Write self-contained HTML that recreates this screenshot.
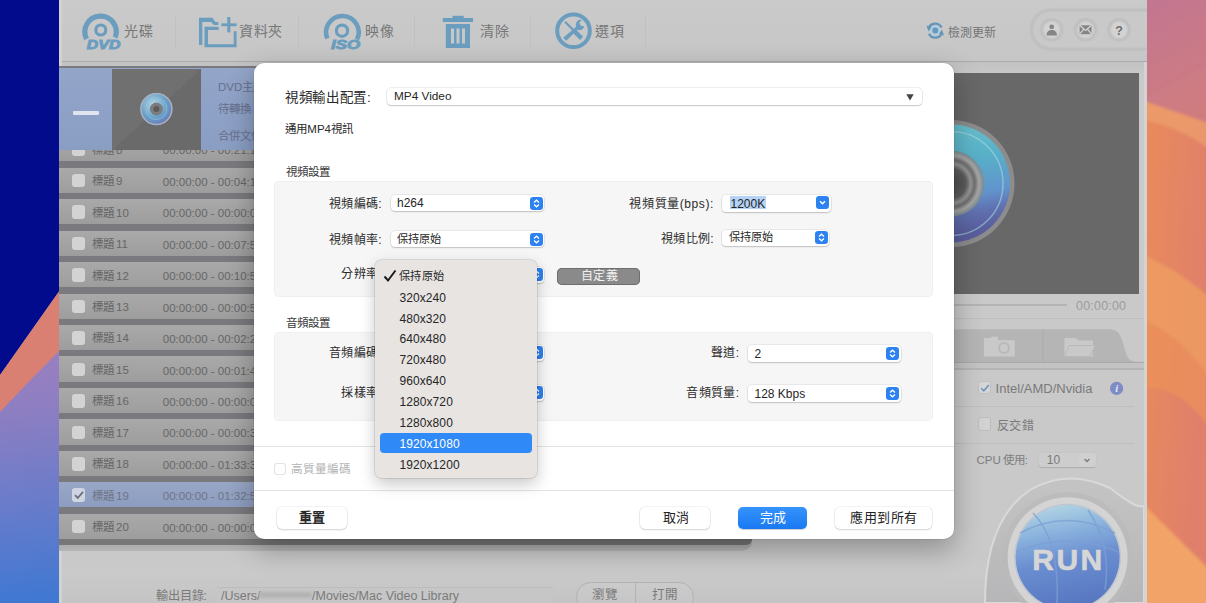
<!DOCTYPE html>
<html lang="zh-TW"><head><meta charset="utf-8">
<style>
*{box-sizing:border-box;margin:0;padding:0}
html,body{width:1206px;height:603px;overflow:hidden;background:#c9c9c9}
body{position:relative;font-family:"Liberation Sans",sans-serif;color:#222}
.a{position:absolute}
.t{position:absolute;white-space:nowrap;line-height:1;font-weight:500}
</style></head><body>

<!-- left wallpaper -->
<svg class="a" style="left:0;top:0" width="60" height="603" viewBox="0 0 60 603">
<defs>
<linearGradient id="lwp" gradientUnits="userSpaceOnUse" x1="0" y1="350" x2="25" y2="603">
<stop offset="0" stop-color="#9a80bf"/><stop offset="0.25" stop-color="#8d7ec2"/><stop offset="0.6" stop-color="#6a7cca"/><stop offset="1" stop-color="#3f78d2"/>
</linearGradient>
</defs>
<rect width="60" height="603" fill="url(#lwp)"/>
<path d="M0 0H60V290L0 375Z" fill="#020b8c"/>
<path d="M0 375L60 290V350Q30 380 0 412Z" fill="#d98073"/>
</svg>

<!-- right wallpaper -->
<svg class="a" style="left:1146px;top:0" width="60" height="603" viewBox="0 0 60 603">
<defs>
<linearGradient id="rwp" x1="0" y1="0" x2="0.3" y2="1">
<stop offset="0" stop-color="#c17592"/><stop offset="1" stop-color="#cf7c80"/>
</linearGradient>
<linearGradient id="rwo" x1="0" y1="0" x2="1" y2="0.6">
<stop offset="0" stop-color="#ea8c5a"/><stop offset="1" stop-color="#df7f6c"/>
</linearGradient>
<linearGradient id="rwl" x1="0" y1="0" x2="1" y2="1">
<stop offset="0" stop-color="#f1a264"/><stop offset="1" stop-color="#ee9660"/>
</linearGradient>
<filter id="bl"><feGaussianBlur stdDeviation="1.5"/></filter>
</defs>
<rect width="60" height="603" fill="url(#rwo)"/>
<g filter="url(#bl)">
<path d="M-5 -5H65V124L-5 100Z" fill="url(#rwp)"/>
<path d="M-5 100L65 124V150Q30 125 -5 120Z" fill="#eea06e" opacity=".7"/>
<path d="M-5 254Q30 268 65 299V380Q30 330 -5 320Z" fill="#ef9c62" opacity=".85"/>
<path d="M-5 320Q30 330 65 380V430Q30 380 -5 390Z" fill="#ec9159" opacity=".7"/>
<path d="M-5 502L65 571V610H-5Z" fill="#f2a468"/>
</g>
</svg>

<!-- app window -->
<div class="a" id="app" style="left:59px;top:0;width:1088px;height:603px;background:#c8c8c8;overflow:hidden"></div>

<!-- toolbar -->
<div class="a" style="left:59px;top:0;width:1088px;height:61px;background:linear-gradient(#cacaca,#c6c6c6)"></div>
<div class="a" style="left:59px;top:61px;width:1088px;height:1px;background:#a9a9a9"></div>
<div class="a" style="left:59px;top:62px;width:1088px;height:5px;background:#c3c3c3"></div>
<div class="a" style="left:59px;top:0;width:3px;height:603px;background:#d2d2d2"></div>
<svg class="a" style="left:0;top:0" width="1147" height="62" viewBox="0 0 1147 62">
<g fill="none" stroke="#6b9dbf">
 <!-- DVD -->
 <path d="M86.6 39A15.7 15.7 0 1 1 115.2 37.5" stroke-width="5.2"/>
 <circle cx="100.8" cy="30" r="5" stroke-width="3.2"/>
 <!-- ISO -->
 <path d="M327.3 38.5A16.3 16.3 0 1 1 357 39.5" stroke-width="4.6"/>
 <circle cx="342" cy="30.7" r="5.6" stroke-width="3.2"/>
 <!-- options -->
 <circle cx="573.5" cy="30.8" r="16.3" stroke-width="4"/>
</g>
<g fill="#6b9dbf">
 <text x="87" y="48.7" font-family="Liberation Sans" font-weight="bold" font-style="italic" font-size="12.5" stroke="#6b9dbf" stroke-width="0.9" transform="translate(87.5 0) scale(1.27 1) translate(-87.5 0)" >DVD</text>
 <text x="331" y="49.4" font-family="Liberation Sans" font-weight="bold" font-style="italic" font-size="13" stroke="#6b9dbf" stroke-width="0.9" transform="translate(331 0) scale(1.3 1) translate(-331 0)">ISO</text>
 <!-- folder -->
 <path d="M199 17.8H212.4L215.5 22H218.4V25H214L211 22H202.3V45H199Z"/>
 <path d="M204.5 26.8H218.7V30H208V44.3H233.7V31.3H236.6V47.3H204.5Z"/>
 <rect x="227.3" y="17" width="3" height="15.4"/>
 <rect x="221.3" y="23.4" width="15.3" height="2.8"/>
 <!-- trash -->
 <rect x="452.5" y="15.8" width="11.2" height="3"/>
 <rect x="442.8" y="18" width="30.2" height="4"/>
 <path d="M445.8 24H470V48H445.8Z M451 28.5V43.6H454V28.5Z M456.5 28.5V43.6H459.5V28.5Z M462 28.5V43.6H465V28.5Z" fill-rule="evenodd"/>
 <!-- wrench/screwdriver -->
 <path d="M564.2 22.6L565.8 21L575 30.2L573.4 31.8Z"/>
 <path d="M572.3 32.2L575.5 29L583.2 36.7L580 39.9Z"/>
 <path d="M563.2 37.7L566.3 40.8L577.3 29.8Q582.5 31.2 584.3 26.5L580.6 25.6L579.3 22.4L582 19.9Q577.2 18.6 575.8 23.9Q575.6 25.5 576.2 26.7Z"/>
</g>
<g stroke="#c0c0c0" stroke-width="1">
 <line x1="175.5" y1="16" x2="175.5" y2="47"/>
 <line x1="298.5" y1="16" x2="298.5" y2="47"/>
 <line x1="414.5" y1="16" x2="414.5" y2="47"/>
 <line x1="530.5" y1="16" x2="530.5" y2="47"/>
 <line x1="645.5" y1="16" x2="645.5" y2="47"/>
</g>
<!-- refresh -->
<g fill="none" stroke="#6596ba" stroke-width="2.4">
 <path d="M928.6 28.5A7 7 0 0 1 941.5 27.5"/>
 <path d="M942 32.5A7 7 0 0 1 929 33.8"/>
</g>
<circle cx="935.3" cy="30.6" r="4.6" fill="#a6d2e6"/>
<circle cx="935.3" cy="30.6" r="3" fill="#6898bc"/>
<path d="M926.5 25.5L928.6 31.5L931.5 27Z M944 35.5L942 29.6L939 34Z" fill="#6596ba"/>
<!-- pill -->
<defs><filter id="sb"><feGaussianBlur stdDeviation="0.8"/></filter></defs>
<rect x="1031.5" y="10" width="140" height="39" rx="19.5" fill="#c9c9c9" stroke="#b9b9b9" stroke-width="2" filter="url(#sb)"/>
<g fill="#d3d3d3" stroke="#b7b7b7" stroke-width="2" filter="url(#sb)">
 <circle cx="1051.7" cy="29.8" r="10"/>
 <circle cx="1085.6" cy="29.8" r="10"/>
 <circle cx="1119" cy="29.8" r="10"/>
</g>
<g fill="#858585">
 <circle cx="1051.7" cy="26.8" r="2.4"/>
 <path d="M1046.5 35.5Q1046.5 30 1051.7 30Q1056.9 30 1056.9 35.5Z"/>
 <path d="M1079.6 25.3H1091.6V34.2H1079.6Z"/>
</g>
<path d="M1079.6 25.3L1085.6 30.5L1091.6 25.3M1079.6 34.2L1083.6 29.3M1091.6 34.2L1087.6 29.3" stroke="#d3d3d3" stroke-width="1.3" fill="none"/>
<text x="1119" y="34.5" text-anchor="middle" font-family="Liberation Sans" font-weight="bold" font-size="12.5" fill="#6e6e6e">?</text>
</svg>
<div class="t" style="left:124px;top:24.3px;font-size:14px;letter-spacing:0.7px;color:#767676">光碟</div>
<div class="t" style="left:239px;top:24.3px;font-size:14px;letter-spacing:0.7px;color:#767676">資料夾</div>
<div class="t" style="left:365px;top:24.3px;font-size:14px;letter-spacing:0.7px;color:#767676">映像</div>
<div class="t" style="left:480px;top:24.3px;font-size:14px;letter-spacing:0.7px;color:#767676">清除</div>
<div class="t" style="left:595px;top:24.3px;font-size:14px;letter-spacing:0.7px;color:#767676">選項</div>
<div class="t" style="left:948px;top:27.3px;font-size:12px;letter-spacing:0.1px;color:#747474">檢測更新</div>



<!-- list -->
<div class="a" style="left:59px;top:540px;width:693px;height:11px;background:linear-gradient(#a3a3a3,#b6b6b6);border-radius:0 0 10px 0"></div>
<div class="a" style="left:59px;top:66px;width:693px;height:479px;background:#7a7a7e;border-radius:0 0 10px 0"></div>
<div class="a" style="left:59px;top:136.30px;width:693px;height:25.2px;background:linear-gradient(#a9a9a9,#a2a2a2 60%,#9d9d9d)"></div>
<div class="a" style="left:71.5px;top:142.50px;width:13.5px;height:13.5px;border-radius:3px;background:#d3d3d3"></div>
<div class="t" style="left:91.5px;top:144.70px;font-size:11.5px;color:#666">標題<span style="margin-left:2.5px">8</span></div>
<div class="t" style="left:162.8px;top:145.40px;font-size:11.5px;color:#666">00:00:00 - 00:21:17</div>
<div class="a" style="left:59px;top:167.75px;width:693px;height:25.2px;background:linear-gradient(#a9a9a9,#a2a2a2 60%,#9d9d9d)"></div>
<div class="a" style="left:71.5px;top:173.95px;width:13.5px;height:13.5px;border-radius:3px;background:#d3d3d3"></div>
<div class="t" style="left:91.5px;top:176.15px;font-size:11.5px;color:#666">標題<span style="margin-left:2.5px">9</span></div>
<div class="t" style="left:162.8px;top:176.85px;font-size:11.5px;color:#666">00:00:00 - 00:04:18</div>
<div class="a" style="left:59px;top:199.20px;width:693px;height:25.2px;background:linear-gradient(#a9a9a9,#a2a2a2 60%,#9d9d9d)"></div>
<div class="a" style="left:71.5px;top:205.40px;width:13.5px;height:13.5px;border-radius:3px;background:#d3d3d3"></div>
<div class="t" style="left:91.5px;top:207.60px;font-size:11.5px;color:#666">標題<span style="margin-left:2.5px">10</span></div>
<div class="t" style="left:162.8px;top:208.30px;font-size:11.5px;color:#666">00:00:00 - 00:00:05</div>
<div class="a" style="left:59px;top:230.65px;width:693px;height:25.2px;background:linear-gradient(#a9a9a9,#a2a2a2 60%,#9d9d9d)"></div>
<div class="a" style="left:71.5px;top:236.85px;width:13.5px;height:13.5px;border-radius:3px;background:#d3d3d3"></div>
<div class="t" style="left:91.5px;top:239.05px;font-size:11.5px;color:#666">標題<span style="margin-left:2.5px">11</span></div>
<div class="t" style="left:162.8px;top:239.75px;font-size:11.5px;color:#666">00:00:00 - 00:07:52</div>
<div class="a" style="left:59px;top:262.10px;width:693px;height:25.2px;background:linear-gradient(#a9a9a9,#a2a2a2 60%,#9d9d9d)"></div>
<div class="a" style="left:71.5px;top:268.30px;width:13.5px;height:13.5px;border-radius:3px;background:#d3d3d3"></div>
<div class="t" style="left:91.5px;top:270.50px;font-size:11.5px;color:#666">標題<span style="margin-left:2.5px">12</span></div>
<div class="t" style="left:162.8px;top:271.20px;font-size:11.5px;color:#666">00:00:00 - 00:10:54</div>
<div class="a" style="left:59px;top:293.55px;width:693px;height:25.2px;background:linear-gradient(#a9a9a9,#a2a2a2 60%,#9d9d9d)"></div>
<div class="a" style="left:71.5px;top:299.75px;width:13.5px;height:13.5px;border-radius:3px;background:#d3d3d3"></div>
<div class="t" style="left:91.5px;top:301.95px;font-size:11.5px;color:#666">標題<span style="margin-left:2.5px">13</span></div>
<div class="t" style="left:162.8px;top:302.65px;font-size:11.5px;color:#666">00:00:00 - 00:00:57</div>
<div class="a" style="left:59px;top:325.00px;width:693px;height:25.2px;background:linear-gradient(#a9a9a9,#a2a2a2 60%,#9d9d9d)"></div>
<div class="a" style="left:71.5px;top:331.20px;width:13.5px;height:13.5px;border-radius:3px;background:#d3d3d3"></div>
<div class="t" style="left:91.5px;top:333.40px;font-size:11.5px;color:#666">標題<span style="margin-left:2.5px">14</span></div>
<div class="t" style="left:162.8px;top:334.10px;font-size:11.5px;color:#666">00:00:00 - 00:02:24</div>
<div class="a" style="left:59px;top:356.45px;width:693px;height:25.2px;background:linear-gradient(#a9a9a9,#a2a2a2 60%,#9d9d9d)"></div>
<div class="a" style="left:71.5px;top:362.65px;width:13.5px;height:13.5px;border-radius:3px;background:#d3d3d3"></div>
<div class="t" style="left:91.5px;top:364.85px;font-size:11.5px;color:#666">標題<span style="margin-left:2.5px">15</span></div>
<div class="t" style="left:162.8px;top:365.55px;font-size:11.5px;color:#666">00:00:00 - 00:01:47</div>
<div class="a" style="left:59px;top:387.90px;width:693px;height:25.2px;background:linear-gradient(#a9a9a9,#a2a2a2 60%,#9d9d9d)"></div>
<div class="a" style="left:71.5px;top:394.10px;width:13.5px;height:13.5px;border-radius:3px;background:#d3d3d3"></div>
<div class="t" style="left:91.5px;top:396.30px;font-size:11.5px;color:#666">標題<span style="margin-left:2.5px">16</span></div>
<div class="t" style="left:162.8px;top:397.00px;font-size:11.5px;color:#666">00:00:00 - 00:00:09</div>
<div class="a" style="left:59px;top:419.35px;width:693px;height:25.2px;background:linear-gradient(#a9a9a9,#a2a2a2 60%,#9d9d9d)"></div>
<div class="a" style="left:71.5px;top:425.55px;width:13.5px;height:13.5px;border-radius:3px;background:#d3d3d3"></div>
<div class="t" style="left:91.5px;top:427.75px;font-size:11.5px;color:#666">標題<span style="margin-left:2.5px">17</span></div>
<div class="t" style="left:162.8px;top:428.45px;font-size:11.5px;color:#666">00:00:00 - 00:00:38</div>
<div class="a" style="left:59px;top:450.80px;width:693px;height:25.2px;background:linear-gradient(#a9a9a9,#a2a2a2 60%,#9d9d9d)"></div>
<div class="a" style="left:71.5px;top:457.00px;width:13.5px;height:13.5px;border-radius:3px;background:#d3d3d3"></div>
<div class="t" style="left:91.5px;top:459.20px;font-size:11.5px;color:#666">標題<span style="margin-left:2.5px">18</span></div>
<div class="t" style="left:162.8px;top:459.90px;font-size:11.5px;color:#666">00:00:00 - 01:33:35</div>
<div class="a" style="left:59px;top:482.25px;width:693px;height:25.2px;background:linear-gradient(#98a7c6,#8d9dc0)"></div>
<div class="a" style="left:71.5px;top:488.45px;width:13.5px;height:13.5px;border-radius:3px;background:#cfd5e2"></div>
<svg class="a" style="left:71.5px;top:488.45px" width="14" height="14" viewBox="0 0 14 14"><path d="M3 7.2L5.8 10L11 3.8" fill="none" stroke="#6a6f7a" stroke-width="1.8"/></svg>
<div class="t" style="left:91.5px;top:490.65px;font-size:11.5px;color:#6f7486">標題<span style="margin-left:2.5px">19</span></div>
<div class="t" style="left:162.8px;top:491.35px;font-size:11.5px;color:#6f7486">00:00:00 - 01:32:56</div>
<div class="a" style="left:59px;top:513.70px;width:693px;height:25.2px;background:linear-gradient(#a9a9a9,#a2a2a2 60%,#9d9d9d)"></div>
<div class="a" style="left:71.5px;top:519.90px;width:13.5px;height:13.5px;border-radius:3px;background:#d3d3d3"></div>
<div class="t" style="left:91.5px;top:522.10px;font-size:11.5px;color:#666">標題<span style="margin-left:2.5px">20</span></div>
<div class="t" style="left:162.8px;top:522.80px;font-size:11.5px;color:#666">00:00:00 - 00:00:08</div>
<div class="a" style="left:59px;top:538.5px;width:693px;height:6.5px;background:#777;border-radius:0 0 10px 0"></div>
<div class="a" style="left:59px;top:68px;width:693px;height:81.5px;background:linear-gradient(#93a5c9,#8a9dc3)"></div>
<div class="a" style="left:73px;top:111px;width:26px;height:4px;background:#dfe4ee;border-radius:1px"></div>
<div class="a" style="left:112px;top:68.5px;width:89px;height:81px;background:linear-gradient(to bottom right,#707070 50%,#6a6a6a 50%)"></div>
<svg class="a" style="left:140px;top:93px" width="33" height="33" viewBox="0 0 33 33">
<defs><radialGradient id="dg" cx="0.4" cy="0.35" r="0.7"><stop offset="0" stop-color="#b6d6e6"/><stop offset="0.6" stop-color="#6aa2c8"/><stop offset="1" stop-color="#6a78b8"/></radialGradient></defs>
<circle cx="16.4" cy="16" r="15.5" fill="url(#dg)" stroke="#a7b3c4" stroke-width="1.5"/>
<circle cx="16.4" cy="16" r="10.5" fill="none" stroke="#8ec4dc" stroke-width="1" opacity=".7"/>
<circle cx="16.4" cy="16" r="6.5" fill="#7c7c80"/>
<circle cx="16.4" cy="16" r="3" fill="#5e5a58"/>
</svg>
<div class="t" style="left:218px;top:81.5px;font-size:11.5px;color:#67708e">DVD主題</div>
<div class="t" style="left:218px;top:104px;font-size:11.5px;color:#67708e">待轉換</div>
<div class="t" style="left:218px;top:131px;font-size:11.5px;color:#67708e">合併文件</div>
<!-- bottom bar -->
<div class="a" style="left:62px;top:551px;width:1082px;height:52px;background:linear-gradient(#c8c8c8,#cacaca 40%,#c4c4c4)"></div>
<div class="a" style="left:217px;top:586.7px;width:336px;height:20px;background:#c6c6c6;border-top:1px solid #bcbcbc"></div>
<div class="t" style="left:155.5px;top:590px;font-size:12.2px;color:#7a7a7a">輸出目錄:</div>
<div class="t" style="left:221px;top:589.5px;font-size:12.5px;color:#7a7a7a">/Users/</div>
<div class="a" style="left:259px;top:592px;width:53px;height:6px;background:#b3b3b3;filter:blur(1.5px)"></div>
<div class="t" style="left:312px;top:589.5px;font-size:12.5px;color:#7a7a7a">/Movies/Mac Video Library</div>
<div class="a" style="left:575.5px;top:581.5px;width:118px;height:30px;border-radius:15px;background:linear-gradient(#cbcbcb,#c4c4c4);border:1px solid #b2b2b2"></div>
<div class="a" style="left:634.5px;top:582px;width:1px;height:22px;background:#b2b2b2"></div>
<div class="t" style="left:592px;top:589px;font-size:12.5px;color:#7a7a7a">瀏覽</div>
<div class="t" style="left:652px;top:589px;font-size:12.5px;color:#7a7a7a">打開</div>


<!-- right panel -->
<div class="a" style="left:762px;top:67px;width:385px;height:483px;background:#c9c9c9"></div>
<div class="a" style="left:762px;top:62px;width:385px;height:11px;background:linear-gradient(#c2c2c2,#c8c8c8)"></div>
<div class="a" style="left:1144px;top:62px;width:3px;height:541px;background:#d3d3d3"></div>
<div class="a" style="left:900px;top:73px;width:239px;height:220.5px;background:#686868;overflow:hidden">
<svg class="a" style="left:0;top:0" width="239" height="221" viewBox="0 0 239 221">
<defs>
<linearGradient id="cdg" x1="0" y1="0" x2="0.2" y2="1">
<stop offset="0" stop-color="#6cc6d0"/><stop offset="0.4" stop-color="#58b0c8"/><stop offset="0.7" stop-color="#6294cc"/><stop offset="0.85" stop-color="#6070b0"/><stop offset="1" stop-color="#5a5e9c"/>
</linearGradient>
<radialGradient id="hub" cx="0.5" cy="0.5" r="0.5"><stop offset="0" stop-color="#4a4a4a"/><stop offset="0.45" stop-color="#5c5c5c"/><stop offset="0.6" stop-color="#959595"/><stop offset="0.72" stop-color="#6e6e6e"/><stop offset="0.85" stop-color="#a6a6a6"/><stop offset="1" stop-color="#7a8a90"/></radialGradient>
</defs>
<circle cx="51" cy="110.5" r="63.5" fill="#8c8c8c"/>
<circle cx="51" cy="110.5" r="59" fill="url(#cdg)"/>
<circle cx="51" cy="110.5" r="52" fill="none" stroke="#a8dde6" stroke-width="1.5" opacity=".55"/>
<circle cx="51" cy="110.5" r="33" fill="url(#hub)"/>
</svg>
</div>
<div class="a" style="left:900px;top:304px;width:166.5px;height:2px;background:#b4b4b4"></div>
<div class="t" style="left:1076px;top:299.5px;font-size:12.5px;color:#9c9c9c;letter-spacing:0.2px">00:00:00</div>
<div class="a" style="left:900px;top:317.5px;width:244px;height:1px;background:#bdbdbd"></div>
<svg class="a" style="left:900px;top:328px" width="244" height="42" viewBox="0 0 244 42">
<path d="M0 1.3H210Q219 1.3 222 12L227 28Q230 34.4 240 34.4H244V42H0Z" fill="#b5b5b5"/>
<path d="M0 34.4H244" stroke="#a9a9a9" stroke-width="1"/>
<rect x="0" y="35" width="244" height="5" fill="#c3c3c3"/>
<line x1="143" y1="1.5" x2="143" y2="34" stroke="#a9a9a9"/>
<g fill="#c9c9c9">
<path d="M84 10H90L92 8.7H98V13H84Z M84 12.3H114.7V28.6H84Z" />
<path d="M164.4 10H176L178 12.5H193V28.6H164.4Z"/>
</g>
<circle cx="104" cy="20" r="5" fill="none" stroke="#b9b9b9" stroke-width="2.2"/>
<path d="M164.4 28.6L169 17.5H195L190 28.6Z" fill="#c9c9c9" stroke="#b9b9b9" stroke-width="1"/>
</svg>
<div class="a" style="left:977.9px;top:380.8px;width:13.5px;height:13.5px;border-radius:3px;background:#d6d6d6;border:1px solid #c0c0c0"></div>
<svg class="a" style="left:977.9px;top:380.8px" width="14" height="14" viewBox="0 0 14 14"><path d="M3.2 7.2L5.8 9.8L10.8 4" fill="none" stroke="#6f90c2" stroke-width="1.5"/></svg>
<div class="t" style="left:995.6px;top:382px;font-size:13px;color:#7a7a7a">Intel/AMD/Nvidia</div>
<svg class="a" style="left:1109px;top:381px" width="16" height="16" viewBox="0 0 16 16"><circle cx="7.6" cy="7.4" r="6.6" fill="#7d8cc4"/><text x="7.6" y="11.4" text-anchor="middle" font-family="Liberation Serif" font-style="italic" font-weight="bold" font-size="10.5" fill="#e6e9f4">i</text></svg>
<div class="a" style="left:954px;top:406px;width:180px;height:1px;background:#bebebe"></div>
<div class="a" style="left:977.9px;top:417px;width:13.5px;height:14px;border-radius:3px;background:#d2d2d2;border:1px solid #bdbdbd"></div>
<div class="t" style="left:997.2px;top:420px;font-size:12px;letter-spacing:0.2px;color:#7a7a7a">反交錯</div>
<div class="a" style="left:954px;top:442.5px;width:180px;height:1px;background:#bebebe"></div>
<div class="t" style="left:976.5px;top:454.5px;font-size:11.5px;color:#7e7e7e">CPU<span style="margin-left:2px">使用:</span></div>
<div class="a" style="left:1039px;top:452.6px;width:56.5px;height:14.6px;border-radius:3px;background:#cdcdcd;box-shadow:0 0.5px 1px rgba(0,0,0,.15)"></div>
<div class="a" style="left:1079px;top:452.6px;width:16.5px;height:14.6px;border-radius:3px;background:#d0d0d0"></div>
<div class="t" style="left:1046.8px;top:454px;font-size:12px;color:#7a7a7a">10</div>
<svg class="a" style="left:1082px;top:455px" width="10" height="10" viewBox="0 0 10 10"><path d="M2.5 4L5 6.5L7.5 4" fill="none" stroke="#7a7a7a" stroke-width="1.3"/></svg>
<!-- RUN -->
<svg class="a" style="left:954px;top:462px" width="190" height="141" viewBox="954 462 190 141">
<defs>
<linearGradient id="runb" x1="0.3" y1="0" x2="0.5" y2="1">
<stop offset="0" stop-color="#b2d6e4"/><stop offset="0.3" stop-color="#86aedc"/><stop offset="0.55" stop-color="#6a8dd0"/><stop offset="1" stop-color="#5676c0"/>
</linearGradient>
<linearGradient id="hous" x1="0" y1="0" x2="0" y2="1"><stop offset="0" stop-color="#c4c4c4"/><stop offset="1" stop-color="#b6b6b8"/></linearGradient>
</defs>
<path d="M985 603Q985 520 1030 490Q1067 468 1110 488Q1125 500 1135 505Q1140 507 1144 506V603Z" fill="url(#hous)" stroke="#d9d9d9" stroke-width="2"/>
<circle cx="1067.6" cy="557.2" r="65" fill="#bababa" opacity=".8"/>
<circle cx="1067.6" cy="557.2" r="60" fill="#d4d4d4"/>
<circle cx="1067.6" cy="557.2" r="53.5" fill="#c0c6d0"/>
<circle cx="1067.6" cy="557.2" r="52" fill="url(#runb)"/>
<g fill="none" stroke="#7c9fd4" stroke-width="1.6" opacity=".75">
<path d="M1020 533Q1067 508 1115 533"/>
<path d="M1016 552Q1067 530 1119 552"/>
<path d="M1033 513Q1060 540 1057 605"/>
<path d="M1088 510Q1112 545 1105 590"/>
</g>
<text x="1068.5" y="570.2" text-anchor="middle" font-family="Liberation Sans" font-weight="bold" font-size="30" letter-spacing="2.5" fill="#d6d6d6" stroke="#d6d6d6" stroke-width="0.6">RUN</text>
</svg>
<!-- dialog -->
<div class="a" id="dlg" style="left:254px;top:63px;width:700px;height:476px;background:#fff;border-radius:10px;box-shadow:0 0 0 0.5px rgba(0,0,0,.12),0 10px 28px rgba(0,0,0,.3)"></div>
<div class="t" style="left:285.3px;top:91px;font-size:13.5px;letter-spacing:0.6px;color:#2a2a2a">視頻輸出配置:</div>
<div class="a" style="left:387px;top:88.3px;width:535px;height:16.5px;background:#fff;border-radius:4px;box-shadow:0 0 0 0.5px rgba(0,0,0,.12),0 1px 1.5px rgba(0,0,0,.18)"></div>
<div class="t" style="left:394px;top:90.5px;font-size:11.8px;color:#262626">MP4 Video</div>
<svg class="a" style="left:905px;top:92px" width="10" height="10" viewBox="0 0 10 10"><path d="M1.3 2.2H8.7L5 8.5Z" fill="#444"/></svg>
<div class="t" style="left:285.3px;top:123.5px;font-size:11.5px;color:#2a2a2a">通用MP4視訊</div>

<div class="t" style="left:285.8px;top:166.8px;font-size:11.5px;color:#3a3a3a">視頻設置</div>
<div class="a" style="left:273.6px;top:181px;width:659.5px;height:116px;background:#f6f6f6;border-radius:5px;box-shadow:inset 0 0 0 0.5px rgba(0,0,0,.06)"></div>

<div class="t" style="right:824px;top:197.8px;font-size:12px;letter-spacing:0.35px;color:#2a2a2a">視頻編碼:</div>
<div class="a" style="left:390.7px;top:195px;width:153px;height:16px;background:#fff;border-radius:4px;box-shadow:0 0 0 0.5px rgba(0,0,0,.1),0 1px 1.5px rgba(0,0,0,.18)"></div>
<div class="t" style="left:397px;top:197px;font-size:12px;color:#262626">h264</div>

<div class="t" style="right:824px;top:233.5px;font-size:12px;letter-spacing:0.35px;color:#2a2a2a">視頻幀率:</div>
<div class="a" style="left:390.7px;top:231.3px;width:153px;height:16px;background:#fff;border-radius:4px;box-shadow:0 0 0 0.5px rgba(0,0,0,.1),0 1px 1.5px rgba(0,0,0,.18)"></div>
<div class="t" style="left:397px;top:233.5px;font-size:11.2px;color:#262626">保持原始</div>

<div class="t" style="right:824px;top:268px;font-size:12px;letter-spacing:0.35px;color:#2a2a2a">分辨率:</div>
<div class="a" style="left:390.7px;top:267px;width:153px;height:16px;background:#fff;border-radius:4px;box-shadow:0 0 0 0.5px rgba(0,0,0,.1),0 1px 1.5px rgba(0,0,0,.18)"></div>

<div class="t" style="right:492px;top:197.5px;font-size:12px;letter-spacing:0.6px;color:#2a2a2a">視頻質量(bps):</div>
<div class="a" style="left:722px;top:194.8px;width:109px;height:17px;background:#fff;border-radius:4px;box-shadow:0 0 0 0.5px rgba(0,0,0,.1),0 1px 1.5px rgba(0,0,0,.18)"></div>
<div class="a" style="left:730px;top:196.4px;width:36.4px;height:12.8px;background:#b4d3f6"></div>
<div class="t" style="left:730.5px;top:197.5px;font-size:12px;color:#262626">1200K</div>

<div class="t" style="right:492px;top:232.5px;font-size:12px;letter-spacing:0.35px;color:#2a2a2a">視頻比例:</div>
<div class="a" style="left:722px;top:229.5px;width:107px;height:16.5px;background:#fff;border-radius:4px;box-shadow:0 0 0 0.5px rgba(0,0,0,.1),0 1px 1.5px rgba(0,0,0,.18)"></div>
<div class="t" style="left:729px;top:232px;font-size:11.2px;color:#262626">保持原始</div>

<div class="a" style="left:556.8px;top:267.5px;width:83.7px;height:17px;border-radius:5px;background:#8a8a8a;box-shadow:inset 0 0 0 1px #6e6e6e"></div>
<div class="t" style="left:580.5px;top:270px;font-size:12px;letter-spacing:0.5px;color:#f2f2f2">自定義</div>

<div class="t" style="left:285.5px;top:317.5px;font-size:11.5px;color:#3a3a3a">音頻設置</div>
<div class="a" style="left:274.3px;top:331.8px;width:658.8px;height:89.5px;background:#f6f6f6;border-radius:5px;box-shadow:inset 0 0 0 0.5px rgba(0,0,0,.06)"></div>
<div class="t" style="right:824px;top:346.5px;font-size:12px;letter-spacing:0.35px;color:#2a2a2a">音頻編碼:</div>
<div class="a" style="left:390.7px;top:344.5px;width:153px;height:16px;background:#fff;border-radius:4px;box-shadow:0 0 0 0.5px rgba(0,0,0,.1),0 1px 1.5px rgba(0,0,0,.18)"></div>
<div class="t" style="right:824px;top:386.5px;font-size:12px;letter-spacing:0.35px;color:#2a2a2a">採樣率:</div>
<div class="a" style="left:390.7px;top:384.5px;width:153px;height:16px;background:#fff;border-radius:4px;box-shadow:0 0 0 0.5px rgba(0,0,0,.1),0 1px 1.5px rgba(0,0,0,.18)"></div>

<div class="t" style="right:466.5px;top:346.5px;font-size:12px;letter-spacing:0.35px;color:#2a2a2a">聲道:</div>
<div class="a" style="left:747.5px;top:345px;width:153px;height:17px;background:#fff;border-radius:4px;box-shadow:0 0 0 0.5px rgba(0,0,0,.1),0 1px 1.5px rgba(0,0,0,.18)"></div>
<div class="t" style="left:754.5px;top:348px;font-size:12px;color:#262626">2</div>
<div class="t" style="right:466.5px;top:386.5px;font-size:12px;letter-spacing:0.35px;color:#2a2a2a">音頻質量:</div>
<div class="a" style="left:747.5px;top:385px;width:153px;height:17px;background:#fff;border-radius:4px;box-shadow:0 0 0 0.5px rgba(0,0,0,.1),0 1px 1.5px rgba(0,0,0,.18)"></div>
<div class="t" style="left:754.5px;top:388px;font-size:12px;color:#262626">128 Kbps</div>

<div class="a" style="left:254px;top:445.8px;width:700px;height:1px;background:#e3e3e3"></div>
<div class="a" style="left:273.7px;top:462.8px;width:12.5px;height:12px;border-radius:3px;background:#fff;box-shadow:inset 0 0 0 1px #e4e4e4"></div>
<div class="t" style="left:290.5px;top:463.3px;font-size:11.6px;color:#b4b4b4">高質量編碼</div>
<div class="a" style="left:254px;top:490px;width:700px;height:1px;background:#e3e3e3"></div>

<div class="a" style="left:276.5px;top:507px;width:70px;height:21.5px;border-radius:5px;background:#fff;box-shadow:0 0 0 0.5px rgba(0,0,0,.09),0 1px 2px rgba(0,0,0,.14)"></div>
<div class="t" style="left:298.5px;top:511px;font-size:13px;color:#2a2a2a;letter-spacing:0.4px;font-weight:bold">重置</div>
<div class="a" style="left:640.3px;top:507.2px;width:70px;height:21.5px;border-radius:5px;background:#fff;box-shadow:0 0 0 0.5px rgba(0,0,0,.09),0 1px 2px rgba(0,0,0,.14)"></div>
<div class="t" style="left:662.5px;top:511px;font-size:13px;color:#222">取消</div>
<div class="a" style="left:737.9px;top:507.2px;width:69px;height:21.5px;border-radius:5px;background:linear-gradient(#3493fb,#1a79f2);box-shadow:0 0.5px 1px rgba(0,0,0,.2)"></div>
<div class="t" style="left:759.5px;top:511px;font-size:13px;color:#fff">完成</div>
<div class="a" style="left:835.2px;top:507.2px;width:97px;height:21.5px;border-radius:5px;background:#fff;box-shadow:0 0 0 0.5px rgba(0,0,0,.09),0 1px 2px rgba(0,0,0,.14)"></div>
<div class="t" style="left:850px;top:511px;font-size:13px;letter-spacing:0.6px;color:#222">應用到所有</div>
<svg class="a" style="left:529.6px;top:196.5px" width="13" height="13" viewBox="0 0 13 13"><rect width="13" height="13" rx="3.2" fill="#2c82f0"/><path d="M4 5.4L6.5 3.2L9 5.4M4 7.6L6.5 9.8L9 7.6" fill="none" stroke="#fff" stroke-width="1.3"/></svg>
<svg class="a" style="left:529.6px;top:232.5px" width="13" height="13" viewBox="0 0 13 13"><rect width="13" height="13" rx="3.2" fill="#2c82f0"/><path d="M4 5.4L6.5 3.2L9 5.4M4 7.6L6.5 9.8L9 7.6" fill="none" stroke="#fff" stroke-width="1.3"/></svg>
<svg class="a" style="left:529.6px;top:268px" width="13" height="13" viewBox="0 0 13 13"><rect width="13" height="13" rx="3.2" fill="#2c82f0"/><path d="M4 5.4L6.5 3.2L9 5.4M4 7.6L6.5 9.8L9 7.6" fill="none" stroke="#fff" stroke-width="1.3"/></svg>
<svg class="a" style="left:816px;top:196px" width="13" height="13" viewBox="0 0 13 13"><rect width="13" height="13" rx="3.2" fill="#2c82f0"/><path d="M4 5.2L6.5 7.8L9 5.2" fill="none" stroke="#fff" stroke-width="1.4"/></svg>
<svg class="a" style="left:814.5px;top:230.5px" width="13" height="13" viewBox="0 0 13 13"><rect width="13" height="13" rx="3.2" fill="#2c82f0"/><path d="M4 5.4L6.5 3.2L9 5.4M4 7.6L6.5 9.8L9 7.6" fill="none" stroke="#fff" stroke-width="1.3"/></svg>
<svg class="a" style="left:529.6px;top:346px" width="13" height="13" viewBox="0 0 13 13"><rect width="13" height="13" rx="3.2" fill="#2c82f0"/><path d="M4 5.4L6.5 3.2L9 5.4M4 7.6L6.5 9.8L9 7.6" fill="none" stroke="#fff" stroke-width="1.3"/></svg>
<svg class="a" style="left:529.6px;top:386px" width="13" height="13" viewBox="0 0 13 13"><rect width="13" height="13" rx="3.2" fill="#2c82f0"/><path d="M4 5.4L6.5 3.2L9 5.4M4 7.6L6.5 9.8L9 7.6" fill="none" stroke="#fff" stroke-width="1.3"/></svg>
<svg class="a" style="left:886px;top:347px" width="13" height="13" viewBox="0 0 13 13"><rect width="13" height="13" rx="3.2" fill="#2c82f0"/><path d="M4 5.4L6.5 3.2L9 5.4M4 7.6L6.5 9.8L9 7.6" fill="none" stroke="#fff" stroke-width="1.3"/></svg>
<svg class="a" style="left:886px;top:387px" width="13" height="13" viewBox="0 0 13 13"><rect width="13" height="13" rx="3.2" fill="#2c82f0"/><path d="M4 5.4L6.5 3.2L9 5.4M4 7.6L6.5 9.8L9 7.6" fill="none" stroke="#fff" stroke-width="1.3"/></svg>

<!-- dropdown menu -->
<div class="a" style="left:374.5px;top:260px;width:162.5px;height:218px;border-radius:6px;background:#e8e4e2;box-shadow:0 0 0 0.5px rgba(0,0,0,.18),0 6px 16px rgba(0,0,0,.22)"></div>
<div class="a" style="left:380px;top:432.5px;width:151.6px;height:20px;border-radius:4px;background:#2f89f6"></div>
<svg class="a" style="left:382px;top:268px" width="16" height="16" viewBox="0 0 16 16"><path d="M2.5 8.5L6 12.5L13.5 2.5" fill="none" stroke="#1c1c1c" stroke-width="2"/></svg>
<div class="t" style="left:399.4px;top:270.70px;font-size:11.2px;letter-spacing:0.1px;color:#262626">保持原始</div>
<div class="t" style="left:399.4px;top:291.60px;font-size:12px;letter-spacing:0.1px;color:#262626">320x240</div>
<div class="t" style="left:399.4px;top:312.50px;font-size:12px;letter-spacing:0.1px;color:#262626">480x320</div>
<div class="t" style="left:399.4px;top:333.40px;font-size:12px;letter-spacing:0.1px;color:#262626">640x480</div>
<div class="t" style="left:399.4px;top:354.30px;font-size:12px;letter-spacing:0.1px;color:#262626">720x480</div>
<div class="t" style="left:399.4px;top:375.20px;font-size:12px;letter-spacing:0.1px;color:#262626">960x640</div>
<div class="t" style="left:399.4px;top:396.10px;font-size:12px;letter-spacing:0.1px;color:#262626">1280x720</div>
<div class="t" style="left:399.4px;top:417.00px;font-size:12px;letter-spacing:0.1px;color:#262626">1280x800</div>
<div class="t" style="left:399.4px;top:437.90px;font-size:12px;letter-spacing:0.1px;color:#fff">1920x1080</div>
<div class="t" style="left:399.4px;top:458.80px;font-size:12px;letter-spacing:0.1px;color:#262626">1920x1200</div>


</body></html>
